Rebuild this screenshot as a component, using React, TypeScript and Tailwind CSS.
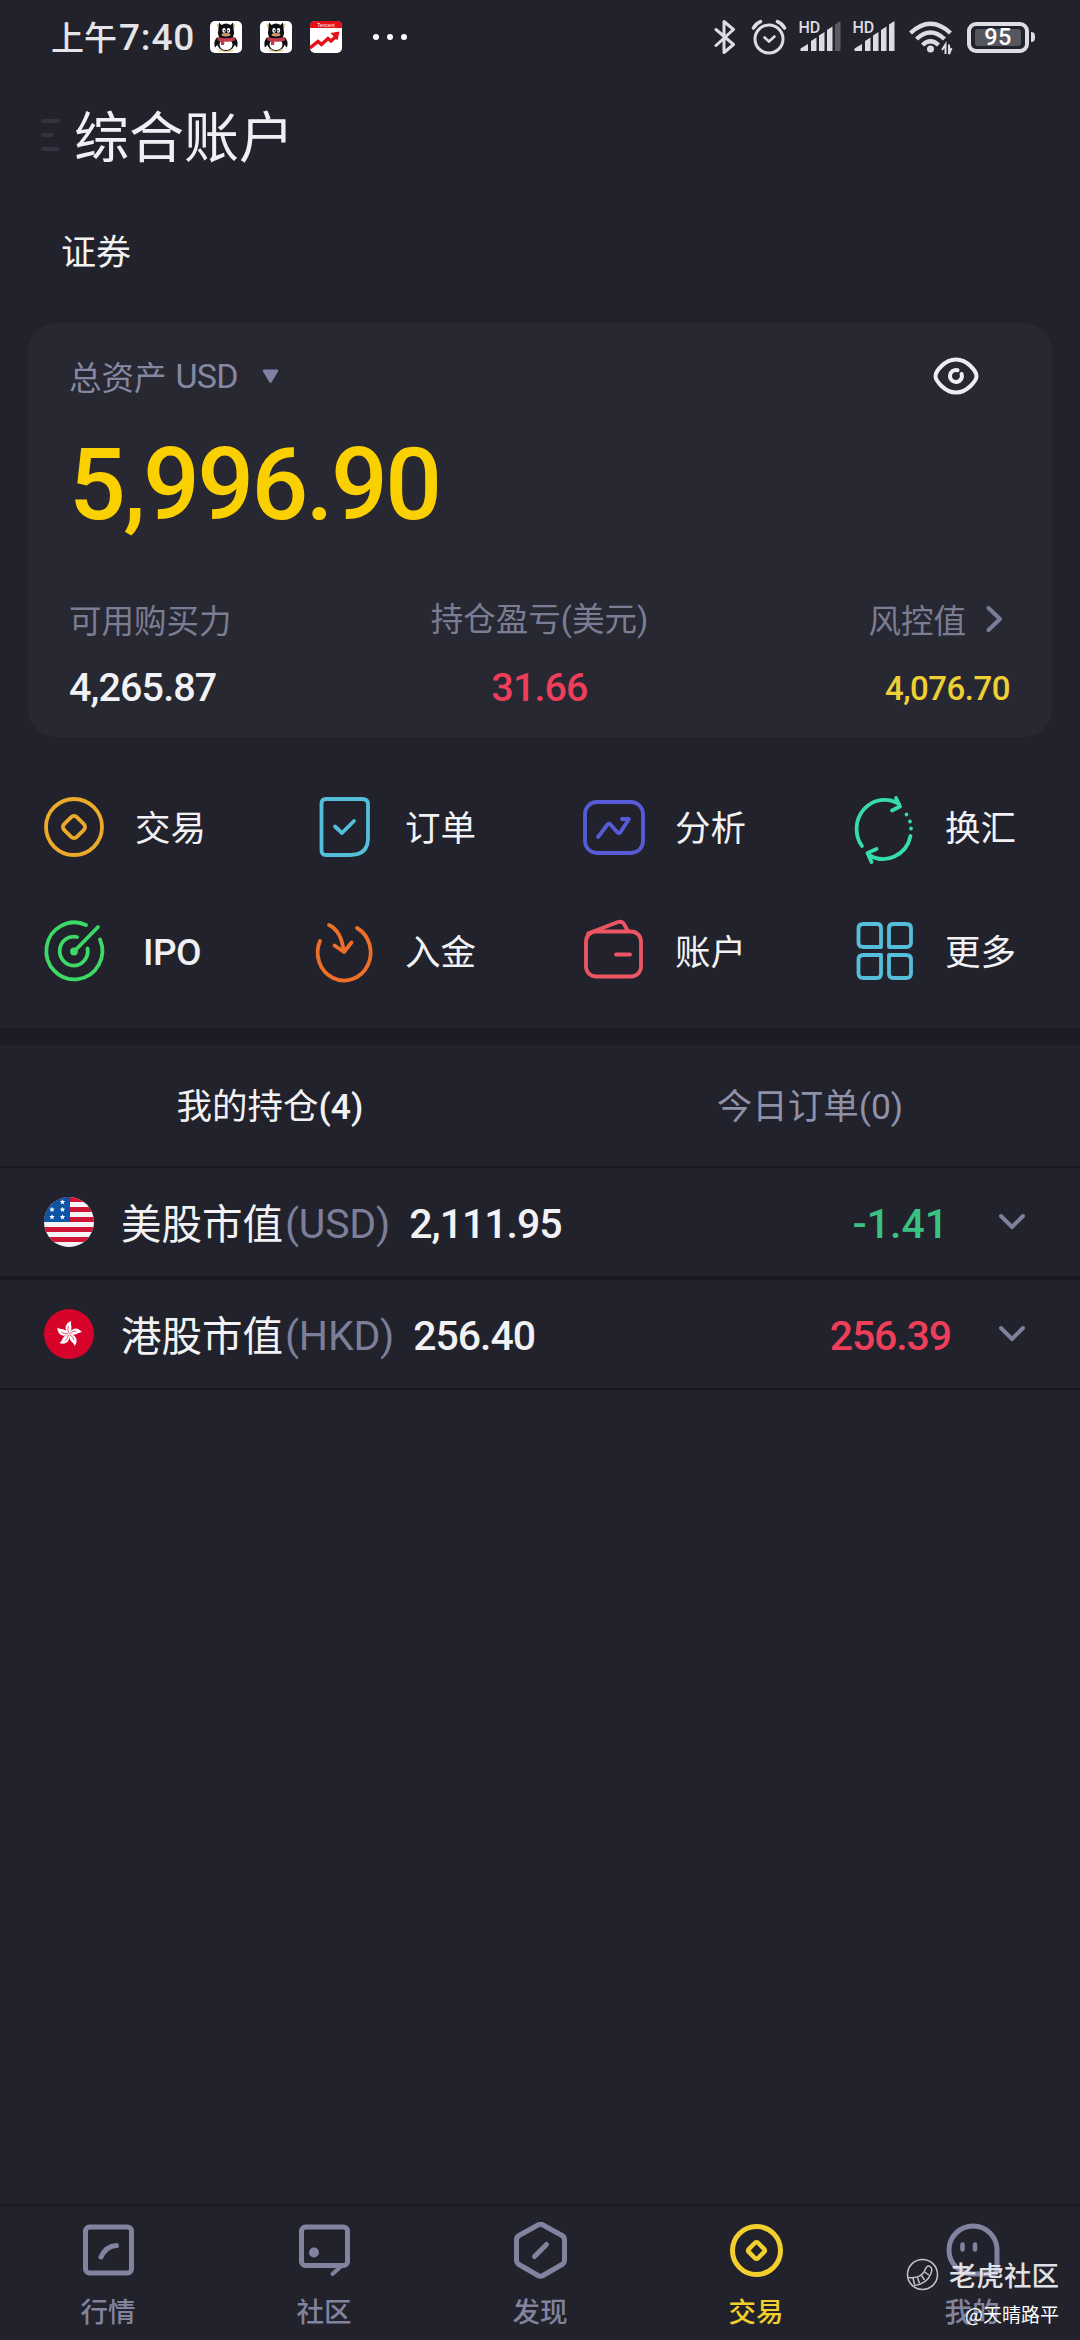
import React from 'react';

const CJK = "font-['Noto_Sans_CJK_SC',sans-serif]";

interface Shortcut {
  label: string;
  icon: React.ReactNode;
}

interface Position {
  name: string;
  currency: string;
  value: string;
  change: string;
  changeClass: string;
  flag: React.ReactNode;
}

const PenguinIcon = () => (
  <svg width="32" height="32" viewBox="0 0 32 32">
    <rect width="32" height="32" rx="5" fill="#fff" />
    <path d="M7.500 3 L9.500 9 M24.500 3 L22.500 9" stroke="#e3c48a" strokeWidth="2" />
    <ellipse cx="16" cy="29.500" rx="8" ry="1.500" fill="#e8cf94" />
    <path d="M7.500 16 C4 19 4 23 5 26.500 L9 22 M24.500 16 C28 19 28 23 27 26.500 L23 22" fill="#0d0d12" />
    <ellipse cx="16" cy="21.500" rx="9" ry="8.500" fill="#0d0d12" />
    <ellipse cx="16" cy="23.500" rx="6.500" ry="5.500" fill="#fff" />
    <path d="M9 1.500 L11.500 4 Q16 1 20.500 4 L23 1.500 L23.500 8 Q25 12 23 16 H9 Q7 12 8.500 8 Z" fill="#0d0d12" />
    <ellipse cx="14" cy="9.500" rx="1.700" ry="2.400" fill="#fff" />
    <ellipse cx="18.500" cy="9.500" rx="1.700" ry="2.400" fill="#fff" />
    <circle cx="14.400" cy="9.800" r="0.800" fill="#111" />
    <circle cx="18.100" cy="9.800" r="0.800" fill="#111" />
    <ellipse cx="16" cy="13.700" rx="4.500" ry="1.700" fill="#cf9a72" />
    <path d="M7.500 16 Q16 18.500 24.500 16 L25 19.500 Q19 21.500 14.500 20.500 L14 24 H11 V20.500 L7.500 19.500 Z" fill="#c23a4c" />
  </svg>
);

const StockIcon = () => (
  <svg width="32" height="32" viewBox="0 0 32 32">
    <rect width="32" height="32" rx="5" fill="#fff" />
    <path d="M0 7 V5 Q0 0 5 0 H27 Q32 0 32 5 V7 Z" fill="#e60f14" />
    <text x="16" y="5.500" textAnchor="middle" fontSize="5" fontFamily="Liberation Sans" fill="#fff">Tencent</text>
    <path d="M0 27 L8 20.500 L11.500 23.500 L18 17.500 L21 20 L26 15.500" fill="none" stroke="#e60f14" strokeWidth="3.400" />
    <path d="M20.500 12 L29.500 10.500 L27.500 19.500 Z" fill="#e60f14" />
  </svg>
);

const Signal = ({ weak }: { weak?: boolean }) => (
  <svg width="42" height="34" viewBox="0 0 42 34" fill="#dcdce2">
    <text x="-0.500" y="12.500" fontSize="16" fontWeight="500" fontFamily="Roboto" fill="#dcdce2">HD</text>
    <path d="M1.500 31 V28.500 L9 24 V31 Z" />
    <path d="M12 31 V21 L17.500 17.500 V31 Z" />
    <path d="M20 31 V15.500 L25.500 12 V31 Z" />
    <path d="M28 31 V10 L33.500 6.500 V31 Z" />
    <path d="M36 31 V4.500 L41.500 1 V31 Z" fill={weak ? '#5a5a63' : '#dcdce2'} />
  </svg>
);

const StatusBar = () => (
  <div className="flex h-[74px] items-center pl-[51px] pr-[45px]">
    <span className={`${CJK} w-[159px] whitespace-nowrap text-[33px] font-medium leading-none text-[#e4e4e9]`}>
      上午<span className="ml-0.5 font-[Roboto] text-[37px] font-medium tracking-[0.8px]">7:40</span>
    </span>
    <div className="flex gap-[18px]">
      <PenguinIcon />
      <PenguinIcon />
      <StockIcon />
    </div>
    <div className="ml-[31px] flex gap-2">
      <i className="size-1.5 rounded-full bg-white" />
      <i className="size-1.5 rounded-full bg-white" />
      <i className="size-1.5 rounded-full bg-white" />
    </div>
    <div className="ml-auto flex items-center">
      <svg width="22" height="36" viewBox="0 0 22 36" fill="none" stroke="#dcdce2" strokeWidth="3" strokeLinejoin="round" strokeLinecap="round">
        <path d="M2 10.500 L19.500 25.500 L10 33.500 V2.500 L19.500 10.500 L2 26.500" />
      </svg>
      <svg className="ml-[15px]" width="36" height="36" viewBox="0 0 36 36" fill="none" stroke="#dcdce2" strokeWidth="3" strokeLinecap="round">
        <circle cx="18" cy="20" r="14" />
        <path d="M13.500 18.500 L18 22.500 L23.500 17.500" strokeWidth="2.600" />
        <path d="M2.500 9 Q5 4.500 9.500 2.700 M33.500 9 Q31 4.500 26.500 2.700" strokeWidth="3.600" />
      </svg>
      <div className="ml-3 flex gap-3">
        <Signal weak />
        <Signal />
      </div>
      <svg className="ml-[14px]" width="44" height="36" viewBox="0 0 44 36" fill="none" stroke="#dcdce2" strokeWidth="4.400">
        <path d="M1.500 14 Q21.500 -4.500 41.500 14" />
        <path d="M7.500 20 Q21.500 7 35.500 20" />
        <path d="M13.500 26 Q21.500 18.500 29.500 26" />
        <circle cx="21.500" cy="30" r="3.500" fill="#dcdce2" stroke="none" />
        <path d="M36.500 35 V25.500 L33 31 M40 25.500 V35 L42.500 29" strokeWidth="2" />
      </svg>
      <div className="ml-[14px] flex h-[31px] w-[62px] items-center justify-center rounded-[9px] border-4 border-[#dcdce2]">
        <div className="flex h-[17px] w-[46px] items-center justify-center rounded-[3px] bg-[#56565f] pt-0.5 font-[Roboto] text-[23.5px] font-medium leading-none tracking-[0.5px] text-white">
          95
        </div>
      </div>
      <i className="ml-0.5 h-[10px] w-1 rounded-r-full bg-[#dcdce2]" />
    </div>
  </div>
);

const AccountCard = () => (
  <section className="mx-7 mt-[29px] h-[414px] rounded-[28px] bg-[#272832] pl-[41px] pr-[42px] pt-[31px]">
    <div className="flex h-11 items-center text-[#8688a2]">
      <span className={`${CJK} text-[32.500px] font-normal leading-none`}>总资产</span>
      <span className="ml-[9px] font-[Roboto] text-[34px] leading-none tracking-[-0.8px]">USD</span>
      <svg className="ml-[24px]" width="17" height="15" viewBox="0 0 17 15">
        <path d="M2 1.800 H15 L8.500 12.500 Z" fill="#8082a4" stroke="#8082a4" strokeWidth="2.500" strokeLinejoin="round" />
      </svg>
      <svg className="ml-auto mr-[31px]" width="46" height="38" viewBox="0 0 46 38" fill="none" stroke="#eeeef2" strokeWidth="4" strokeLinecap="round">
        <path d="M2.500 19 C2.500 15 11 2.500 23 2.500 S43.500 15 43.500 19 S35 35.500 23 35.500 S2.500 23 2.500 19 Z" />
        <path d="M24.500 13.200 A6 6 0 1 0 28.600 17" />
      </svg>
    </div>
    <div className="mt-[29px] h-[116px] font-[Roboto] text-[100px] font-medium leading-[116px] tracking-[-2.600px] text-[#fbd000]">5,996.90</div>
    <div className={`${CJK} mt-[54px] grid h-11 grid-cols-3 items-center text-[32.500px] font-normal leading-none text-[#7b7d94]`}>
      <span>可用购买力</span>
      <span className="text-center">持仓盈亏<span className="font-[Roboto]">(</span>美元<span className="font-[Roboto]">)</span></span>
      <span className="flex items-center justify-end pr-[7px]">
        风控值
        <svg className="ml-5" width="17" height="28" viewBox="0 0 17 28" fill="none" stroke="#7b7d98" strokeWidth="4" strokeLinecap="round" strokeLinejoin="round">
          <path d="M2.500 3 L14 14 L2.500 25" />
        </svg>
      </span>
    </div>
    <div className="mt-[25px] grid h-11 grid-cols-3 items-center font-[Roboto] text-[39.500px] font-medium leading-none tracking-[-0.900px] text-[#f2f2f5]">
      <span>4,265.87</span>
      <span className="text-center text-[#ef3e5a]">31.66</span>
      <span className="text-right text-[33px] tracking-[-0.500px] text-[#efd034]">4,076.70</span>
    </div>
  </section>
);

const shortcuts: Shortcut[] = [
  {
    label: '交易',
    icon: (
      <g stroke="#eda929">
        <circle cx="32" cy="32" r="28" />
        <rect x="23" y="23" width="18" height="18" rx="4" transform="rotate(45 32 32)" />
      </g>
    ),
  },
  {
    label: '订单',
    icon: (
      <g stroke="#54bedb">
        <path d="M14 4 H50 Q56 4 56 9 V43 Q56 60 38 60 H14 Q9.500 60 9.500 55 V9 Q9.500 4 14 4 Z" />
        <path d="M23 31.500 L30 38 L42 26" />
      </g>
    ),
  },
  {
    label: '分析',
    icon: (
      <g stroke="#565cd8">
        <rect x="3" y="7" width="58" height="51" rx="12" />
        <path d="M16 42 L25.500 29.500 Q27 28 28.500 29.500 L35.500 37.500 Q37 39 38.500 37 L47 24 H40" />
      </g>
    ),
  },
  {
    label: '换汇',
    icon: (
      <g stroke="#36dbae">
        <path d="M10 51 A28 29 0 0 1 47 9" />
        <path d="M44 3 L48 11.500 L40 15.500" />
        <path d="M58.500 41 A28 29 0 0 1 17 60" />
        <path d="M24.500 54 L15.500 58 L19.500 67" />
        <path d="M54.500 19.500 V19.500 M58 26.500 V26.500 M59 33.500 V33.500" />
      </g>
    ),
  },
  {
    label: 'IPO',
    icon: (
      <g stroke="#3dd866">
        <path d="M44 6 A28 28.500 0 1 0 58 20.500" />
        <path d="M35 18 A14 14.500 0 1 0 45.500 29.500" />
        <path d="M33 31.500 L56 8" />
        <circle cx="32" cy="32.500" r="2" fill="#3dd866" />
      </g>
    ),
  },
  {
    label: '入金',
    icon: (
      <g stroke="#ee6f28">
        <path d="M8 22 A26.500 28 0 1 0 45 9" />
        <path d="M17 6 Q29.500 12 31.500 32" />
        <path d="M22.500 26.500 L32 33 L39.500 23.500" />
      </g>
    ),
  },
  {
    label: '账户',
    icon: (
      <g stroke="#ee5563">
        <rect x="4" y="12.500" width="55" height="45" rx="10" />
        <path d="M6 14.500 L36 3 Q40 2 42 5 L45 10.500" />
        <path d="M34 35.500 H48" />
      </g>
    ),
  },
  {
    label: '更多',
    icon: (
      <g stroke="#54bedb">
        <path d="M11.500 5 H25 Q29 5 29 9 V28 H11.500 Q6.500 28 6.500 23.500 V9.500 Q6.500 5 11.500 5 Z" />
        <path d="M41 5 H54 Q59 5 59 9.500 V23.500 Q59 28 54 28 H37 V9.500 Q37 5 41 5 Z" />
        <path d="M11.500 36 H29 V54.500 Q29 59 25 59 H11.500 Q6.500 59 6.500 54.500 V40.500 Q6.500 36 11.500 36 Z" />
        <path d="M37 36 H54 Q59 36 59 40.500 V54.500 Q59 59 54 59 H41 Q37 59 37 54.500 Z" />
      </g>
    ),
  },
];

const UsFlag = () => (
  <svg width="50" height="50" viewBox="0 0 50 50">
    <defs>
      <clipPath id="round">
        <circle cx="25" cy="25" r="25" />
      </clipPath>
    </defs>
    <g clipPath="url(#round)">
      <rect width="50" height="50" fill="#f6f4f6" />
      {[0, 10, 20, 30, 40].map((y) => (
        <rect key={y} y={y} width="50" height="5" fill="#cf1436" />
      ))}
      <rect width="26" height="25" fill="#0b53a5" />
      {[[18.5, 5], [8, 12.5], [18.5, 12.5], [8, 20], [18.5, 20]].map(([x, y]) => (
        <path key={`${x}-${y}`} transform={`translate(${x} ${y})`} d="M0 -2.800 L0.800 -0.900 L2.700 -0.800 L1.200 0.500 L1.700 2.400 L0 1.300 L-1.700 2.400 L-1.200 0.500 L-2.700 -0.800 L-0.800 -0.900 Z" fill="#fff" />
      ))}
    </g>
  </svg>
);

const HkFlag = () => (
  <svg width="50" height="50" viewBox="0 0 50 50">
    <circle cx="25" cy="25" r="25" fill="#d8032b" />
    {[0, 72, 144, 216, 288].map((deg) => (
      <g key={deg} transform={`rotate(${deg} 25 25)`}>
        <path d="M25 25 C20 21 20 14.500 27.500 12 C25.500 15.500 30 19 25 25 Z" fill="#fff" />
        <path d="M25 24 Q23 20.500 24.500 17" fill="none" stroke="#d8032b" strokeWidth="0.600" />
      </g>
    ))}
  </svg>
);

const positions: Position[] = [
  { name: '美股市值', currency: '(USD)', value: '2,111.95', change: '-1.41', changeClass: 'mr-[50px] text-[#3ac283]', flag: <UsFlag /> },
  { name: '港股市值', currency: '(HKD)', value: '256.40', change: '256.39', changeClass: 'mr-[47px] tracking-[-1.100px] text-[#ef3e5a]', flag: <HkFlag /> },
];

const PositionRow = ({ position }: { position: Position }) => (
  <div className="flex h-[108px] items-center pl-11 pr-[54px] font-[Roboto] text-[41px] leading-none">
    {position.flag}
    <span className={`${CJK} ml-[27px] text-[40.500px] text-[#f2f2f5]`}>{position.name}</span>
    <span className="ml-0.5 pt-[5px] tracking-[-0.200px] text-[#7d7f9a]">{position.currency}</span>
    <span className="ml-[19px] pt-[5px] font-medium tracking-[-1px] text-[#f2f2f5]">{position.value}</span>
    <span className={`ml-auto pt-[5px] font-medium ${position.changeClass}`}>{position.change}</span>
    <svg width="28" height="18" viewBox="0 0 28 18" fill="none" stroke="#7e809c" strokeWidth="4" strokeLinecap="round" strokeLinejoin="round">
      <path d="M3 3 L14 14 L25 3" />
    </svg>
  </div>
);

const navItems: Shortcut[] = [
  {
    label: '行情',
    icon: (
      <>
        <rect x="5.500" y="5" width="46" height="46" rx="4" />
        <path d="M21 35 Q26 24 36.500 23.500" />
      </>
    ),
  },
  {
    label: '社区',
    icon: (
      <>
        <rect x="5.500" y="5" width="46" height="38.500" rx="4" />
        <path d="M46 43.500 L36.500 52" strokeWidth="4" />
        <circle cx="18" cy="30.500" r="5" fill="#82849f" stroke="none" />
      </>
    ),
  },
  {
    label: '发现',
    icon: (
      <>
        <path d="M26 3 Q28.500 1.500 31 3 L50 13.500 Q52.500 15 52.500 18 V38 Q52.500 41 50 42.500 L31 53.500 Q28.500 55 26 53.500 L7 42.500 Q4.500 41 4.500 38 V18 Q4.500 15 7 13.500 Z" />
        <path d="M22.500 34.500 L34.500 22.500" />
      </>
    ),
  },
  {
    label: '交易',
    icon: (
      <>
        <circle cx="28.500" cy="28.500" r="24" />
        <rect x="22" y="22" width="13" height="13" rx="2" transform="rotate(45 28.500 28.500)" strokeWidth="4.500" />
      </>
    ),
  },
  {
    label: '我的',
    icon: (
      <>
        <path d="M28.500 52 A24 24 0 1 1 53 28 V47 Q53 52 48 52 Z" />
        <path d="M18.500 22.500 V27.500 M31 22.500 V27.500" strokeWidth="4.500" />
      </>
    ),
  },
];

const App: React.FC = () => {
  return (
    <div className="relative flex h-[2340px] w-[1080px] flex-col overflow-hidden bg-[#21222b]">
      <StatusBar />

      <header className="flex h-[122px] items-center pl-[41px]">
        <div className="flex flex-col gap-[10px]">
          <i className="h-1 w-[19px] rounded-full bg-[#32333e]" />
          <i className="h-1 w-[13px] rounded-full bg-[#32333e]" />
          <i className="h-1 w-[19px] rounded-full bg-[#32333e]" />
        </div>
        <h1 className={`${CJK} -mt-1 ml-[14px] text-[55px] leading-none text-[#f0f0f4]`}>综合账户</h1>
      </header>

      <div className={`${CJK} flex h-[98px] items-center pl-[61px] pt-[8px] text-[35px] leading-none text-[#f2f2f5]`}>证券</div>

      <AccountCard />

      <nav className="grid h-[291px] grid-cols-4 content-start pt-[28px]">
        {shortcuts.map((item) => (
          <div key={item.label} className="flex h-[124px] items-center pl-[42px]">
            <svg className="shrink-0 overflow-visible" width="64" height="64" viewBox="0 0 64 64" fill="none" strokeWidth="3.800" strokeLinecap="round" strokeLinejoin="round">
              {item.icon}
            </svg>
            {item.label === 'IPO' ? (
              <span className="ml-[37px] mt-0.5 font-[Roboto] text-[37px] font-medium leading-none tracking-[-0.500px] text-[#f0f0f4]">IPO</span>
            ) : (
              <span className={`${CJK} -mt-0.5 ml-[29px] text-[35.500px] leading-none text-[#f2f2f5]`}>{item.label}</span>
            )}
          </div>
        ))}
      </nav>

      <div className="h-[17px] bg-[#1b1c24]" />

      <div className={`${CJK} grid h-[123px] grid-cols-2 place-items-center border-b-2 border-[#16171f] text-[35.500px] leading-none`}>
        <span className="text-[#f2f2f5]">我的持仓<span className="font-[Roboto] font-medium">(4)</span></span>
        <span className="text-[#8f91a8]">今日订单<span className="font-[Roboto]">(0)</span></span>
      </div>

      <PositionRow position={positions[0]} />
      <div className="h-1 bg-[#16171f]" />
      <PositionRow position={positions[1]} />
      <div className="h-0.5 bg-[#16171f]" />

      <footer className="mt-auto grid h-[136px] grid-cols-5 border-t-2 border-[#191a22]">
        {navItems.map((item, i) => {
          const active = i === 3;
          return (
            <div key={item.label} className={`flex flex-col items-center pt-4 ${active ? 'text-[#f2cf2d]' : 'text-[#82849f]'}`}>
              <svg width="57" height="58" viewBox="0 0 57 58" fill="none" stroke="currentColor" strokeWidth="5" strokeLinecap="round" strokeLinejoin="round">
                {item.icon}
              </svg>
              <span className={`${CJK} mt-[17px] text-[27.500px] font-medium leading-none`}>{item.label}</span>
            </div>
          );
        })}
      </footer>

      {/* Watermark over the bottom bar */}
      <div className={`${CJK} absolute bottom-[17px] right-[21px] flex flex-col items-end text-white`}>
        <div className="flex items-center text-[27.500px] font-medium leading-none text-[#e0e0e6]">
          <svg className="mr-[10px]" width="33" height="33" viewBox="0 0 33 33" fill="none" stroke="#c2c2ca" strokeWidth="1.500">
            <circle cx="16.500" cy="16.500" r="15" />
            <path d="M2.500 19.500 Q16 21 19.500 11 Q21 7 24 8.500 Q27 10.500 25 15.500 Q21 26 8 27.500" />
            <path d="M7 20 L8.500 26.500 M11.500 19.500 L13.500 25.500 M15.500 17.500 L18.500 22 M18.500 14 L23 17" />
          </svg>
          老虎社区
        </div>
        <div className="mt-[13px] text-[19px] leading-none">@天晴路平</div>
      </div>
    </div>
  );
};

export default App;
